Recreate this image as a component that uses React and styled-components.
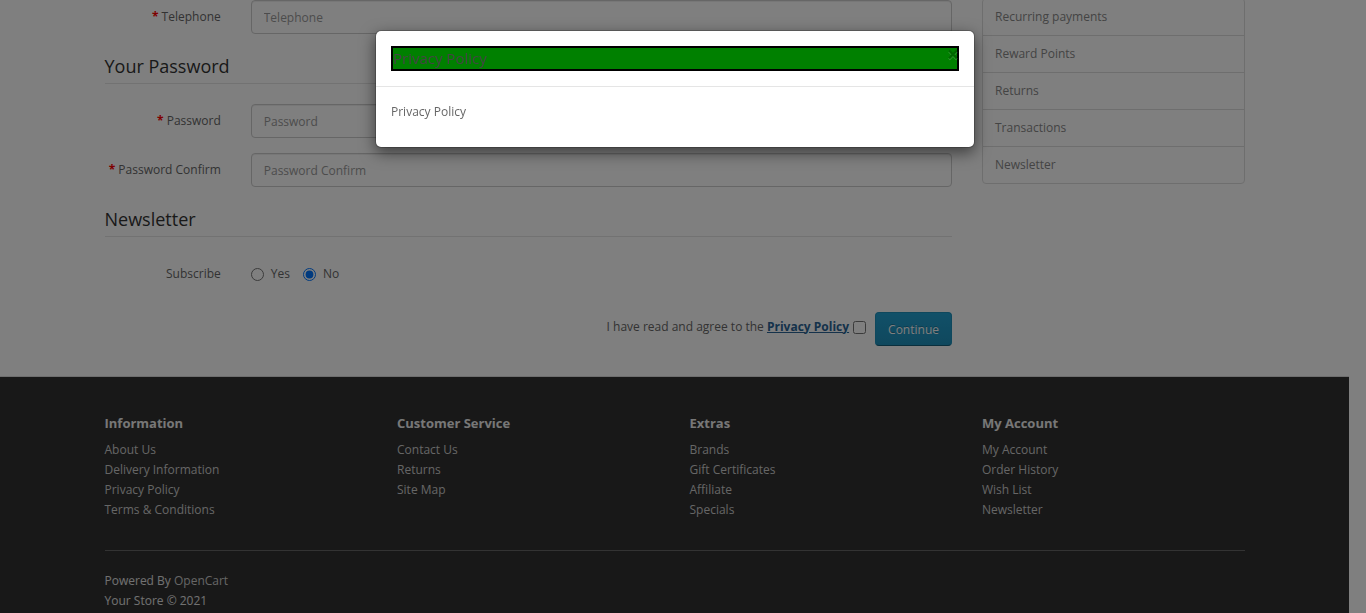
import styled, { createGlobalStyle } from "styled-components";

const GlobalStyle = createGlobalStyle`
    *, *::before, *::after {
        box-sizing: border-box;
    }

    html,
    body {
        margin: 0;
        overflow: hidden;
        background: #fff;
    }

    body {
        font-family: "Open Sans", "Liberation Sans", sans-serif;
        font-size: 12px;
        line-height: 20px;
        color: #666;
    }
`;

const sidebarLinks = ["Recurring payments", "Reward Points", "Returns", "Transactions", "Newsletter"];

const footerColumns = [
    { title: "Information", links: ["About Us", "Delivery Information", "Privacy Policy", "Terms & Conditions"] },
    { title: "Customer Service", links: ["Contact Us", "Returns", "Site Map"] },
    { title: "Extras", links: ["Brands", "Gift Certificates", "Affiliate", "Specials"] },
    { title: "My Account", links: ["My Account", "Order History", "Wish List", "Newsletter"] },
];

const Page = styled.div`
    width: 1349px;
    background: #fff;
`;

const Container = styled.div`
    width: 1170px;
    margin: 0 auto;
    padding: 0 15px;
`;

const MainRow = styled.div`
    display: grid;
    grid-template-columns: 847.5px 262.5px;
    column-gap: 30px;
    align-items: start;
`;

const FormGroup = styled.div`
    display: grid;
    grid-template-columns: 116.25px 1fr;
    column-gap: 30px;
    min-height: 34px;
    margin-bottom: 15px;
`;

const ControlLabel = styled.label`
    padding-top: 7px;
    text-align: right;
    font-weight: normal;

    &::before {
        content: ${({ $required }) => ($required ? "'* '" : "none")};
        color: #f00;
        font-weight: bold;
    }
`;

const TextInput = styled.input`
    display: block;
    width: 100%;
    height: 34px;
    padding: 6px 12px;
    border: 1px solid #ccc;
    border-radius: 4px;
    font: inherit;
    color: #555;
    background: #fff;
    box-shadow: inset 0 1px 1px rgba(0, 0, 0, 0.075);
    outline: none;

    &::placeholder {
        color: #999;
    }
`;

const Legend = styled.div`
    margin: 0 0 20px;
    padding: 7px 0;
    border-bottom: 1px solid #e5e5e5;
    font-size: 18px;
    line-height: 20px;
    color: #333;
`;

const RadioGroup = styled.div`
    display: flex;
    align-items: center;
    align-self: start;
    gap: 13px;
    padding-top: 7px;
`;

const RadioLabel = styled.label`
    display: inline-flex;
    align-items: center;
    gap: 7px;

    input {
        width: 13px;
        height: 13px;
        margin: 0;
    }
`;

const Buttons = styled.div`
    display: flex;
    justify-content: flex-end;
    align-items: center;
    height: 34px;
    margin: 21px 0 30px;
`;

const AgreeText = styled.span`
    padding-bottom: 5px;
`;

const AgreeLink = styled.a`
    color: #2a6496;
    font-weight: bold;
    text-decoration: underline;
`;

const AgreeCheck = styled.input`
    width: 13px;
    height: 13px;
    margin: 0 9px 4px 4px;
`;

const PrimaryButton = styled.button`
    height: 34px;
    padding: 7.5px 12px;
    border: 1px solid;
    border-color: #1f90bb #1f90bb #145e7a;
    border-radius: 4px;
    background-color: #229ac8;
    background-image: linear-gradient(to bottom, #23a1d1, #1f90bb);
    color: #fff;
    font: inherit;
    line-height: 17px;
    text-shadow: 0 -1px 0 rgba(0, 0, 0, 0.25);
`;

const ListGroup = styled.div`
    margin-top: -2px;
`;

const ListItem = styled.a`
    display: block;
    margin-bottom: -1px;
    padding: 8px 12px;
    border: 1px solid #ddd;
    background: #fff;
    color: #888;
    text-decoration: none;

    &:first-child {
        border-radius: 4px 4px 0 0;
    }

    &:last-child {
        border-radius: 0 0 4px 4px;
    }
`;

const Footer = styled.footer`
    border-top: 1px solid #ddd;
    background: #303030;
    color: #e2e2e2;
    padding: 30px 0 10px;
`;

const FooterColumns = styled.div`
    display: grid;
    grid-template-columns: repeat(4, 262.5px);
    column-gap: 30px;
`;

const FooterHeading = styled.h5`
    margin: 9px 0 0;
    font-size: 13px;
    line-height: 14px;
    font-weight: bold;
    color: #eee;
`;

const FooterList = styled.ul`
    margin: 10px 0 9px;
    padding: 0;
    list-style: none;

    a {
        color: #ccc;
        text-decoration: none;
    }
`;

const FooterRule = styled.hr`
    margin: 21px 0 20px;
    border: none;
    border-bottom: 1px solid #666;
`;

const FooterText = styled.p`
    margin: 0;

    a {
        color: #ccc;
        text-decoration: none;
    }
`;

const Backdrop = styled.div`
    position: fixed;
    inset: 0;
    background: rgba(0, 0, 0, 0.5);
    z-index: 10;
`;

const ModalLayer = styled.div`
    position: fixed;
    top: 0;
    left: 0;
    width: 1350px;
    z-index: 20;
`;

const ModalDialog = styled.div`
    width: 600px;
    margin: 30px auto;
    border: 1px solid rgba(0, 0, 0, 0.2);
    border-radius: 6px;
    background: #fff;
    background-clip: padding-box;
    box-shadow: 0 5px 15px rgba(0, 0, 0, 0.5);
`;

const ModalHeader = styled.div`
    padding: 15px;
    border-bottom: 1px solid #e5e5e5;
`;

const CloseButton = styled.button`
    float: right;
    margin-top: -2px;
    padding: 0;
    border: 0;
    background: none;
    font-family: "Open Sans", "Liberation Sans", sans-serif;
    font-size: 21px;
    font-weight: bold;
    line-height: 1;
    color: #000;
    text-shadow: 0 1px 0 #fff;
    opacity: 0.2;
`;

const ModalTitle = styled.h4`
    margin: 0;
    border: 2px solid #000;
    background: #008000;
    font-size: 15px;
    font-weight: normal;
    line-height: 21px;
    color: #444;
`;

const ModalBody = styled.div`
    padding: 15px;

    p {
        margin: 0 0 10px;
    }
`;

export default function App() {
    return (
        <>
            <GlobalStyle />
            <Page>
                <Container>
                    <MainRow>
                        <div>
                            <FormGroup>
                                <ControlLabel $required>Telephone</ControlLabel>
                                <TextInput type="tel" placeholder="Telephone" readOnly />
                            </FormGroup>

                            <Legend>Your Password</Legend>
                            <FormGroup>
                                <ControlLabel $required>Password</ControlLabel>
                                <TextInput type="password" placeholder="Password" readOnly />
                            </FormGroup>
                            <FormGroup>
                                <ControlLabel $required>Password Confirm</ControlLabel>
                                <TextInput type="password" placeholder="Password Confirm" readOnly />
                            </FormGroup>

                            <Legend>Newsletter</Legend>
                            <FormGroup>
                                <ControlLabel>Subscribe</ControlLabel>
                                <RadioGroup>
                                    <RadioLabel>
                                        <input type="radio" name="newsletter" value="1" />
                                        Yes
                                    </RadioLabel>
                                    <RadioLabel>
                                        <input type="radio" name="newsletter" value="0" defaultChecked />
                                        No
                                    </RadioLabel>
                                </RadioGroup>
                            </FormGroup>

                            <Buttons>
                                <AgreeText>
                                    I have read and agree to the <AgreeLink href="#">Privacy Policy</AgreeLink>
                                </AgreeText>
                                <AgreeCheck type="checkbox" name="agree" />
                                <PrimaryButton type="button">Continue</PrimaryButton>
                            </Buttons>
                        </div>

                        <ListGroup>
                            {sidebarLinks.map((label) => (
                                <ListItem key={label} href="#">
                                    {label}
                                </ListItem>
                            ))}
                        </ListGroup>
                    </MainRow>
                </Container>

                <Footer>
                    <Container>
                        <FooterColumns>
                            {footerColumns.map((column) => (
                                <div key={column.title}>
                                    <FooterHeading>{column.title}</FooterHeading>
                                    <FooterList>
                                        {column.links.map((link) => (
                                            <li key={link}>
                                                <a href="#">{link}</a>
                                            </li>
                                        ))}
                                    </FooterList>
                                </div>
                            ))}
                        </FooterColumns>
                        <FooterRule />
                        <FooterText>
                            Powered By <a href="#">OpenCart</a>
                        </FooterText>
                        <FooterText>Your Store © 2021</FooterText>
                    </Container>
                </Footer>
            </Page>

            <Backdrop />
            <ModalLayer>
                <ModalDialog role="dialog">
                    <ModalHeader>
                        <CloseButton type="button" aria-hidden>
                            ×
                        </CloseButton>
                        <ModalTitle>Privacy Policy</ModalTitle>
                    </ModalHeader>
                    <ModalBody>
                        <p>Privacy Policy</p>
                    </ModalBody>
                </ModalDialog>
            </ModalLayer>
        </>
    );
}
